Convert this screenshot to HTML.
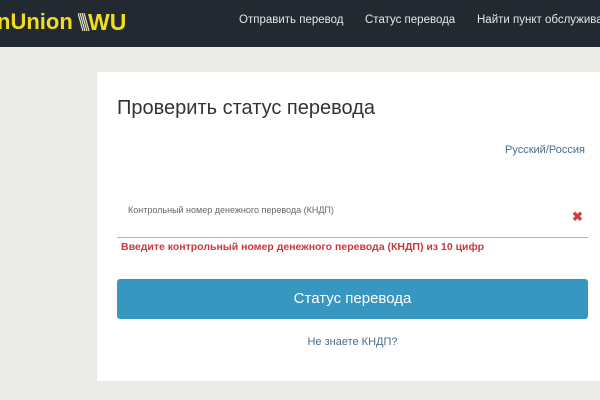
<!DOCTYPE html>
<html><head><meta charset="utf-8"><style>
*{margin:0;padding:0;box-sizing:border-box}
body{width:600px;height:400px;overflow:hidden;background:#ebebe7;font-family:"Liberation Sans",sans-serif;position:relative}
.hdr{position:absolute;left:0;top:0;width:600px;height:47px;background:#232931;overflow:hidden}
.logo{position:absolute;left:-3px;top:9px;font-size:22px;color:#f2dc1e;font-weight:bold;white-space:nowrap}
.sl{position:absolute;left:78px;top:12px}
.wu{position:absolute;left:88px;top:9px;font-size:23px;color:#f2dc1e;font-weight:bold}
.nav{position:absolute;top:14px;font-size:11.5px;color:#e6e8ea;white-space:nowrap}
.card{position:absolute;left:97px;top:72px;width:503px;height:309px;background:#fff}
.t{position:absolute;left:20px;top:25px;font-size:20px;color:#333}
.lang{position:absolute;left:408px;top:72px;font-size:11px;color:#4a6e8a}
.lbl{position:absolute;left:31px;top:133px;font-size:9px;color:#666}
.x{position:absolute;left:475px;top:137px;font-size:13px;color:#d9383a;font-weight:bold}
.line{position:absolute;left:20px;top:165px;width:471px;height:1px;background:#d9a0a0}
.err{position:absolute;left:24px;top:169px;font-size:10.5px;color:#c9393b;font-weight:bold;white-space:nowrap}
.btn{position:absolute;left:20px;top:207px;width:471px;height:40px;background:#3897c1;border-radius:3px;color:#fff;font-size:15px;text-align:center;line-height:40px}
.nk{position:absolute;left:0;width:491px;top:264px;text-align:center;font-size:11px;color:#4a6e8a;padding-left:20px}
</style></head><body>
<div class="hdr">
<div class="logo">nUnion</div>
<svg class="sl" width="12" height="20" viewBox="0 0 12 20"><g stroke="#e8e4c0" stroke-width="1.2"><line x1="0" y1="1" x2="5" y2="19"/><line x1="2" y1="1" x2="7" y2="19"/><line x1="4" y1="1" x2="9" y2="19"/><line x1="6" y1="1" x2="11" y2="19"/></g></svg>
<div class="wu">WU</div>
<div class="nav" style="left:239px">Отправить перевод</div>
<div class="nav" style="left:365px">Статус перевода</div>
<div class="nav" style="left:477px">Найти пункт обслуживания</div>
</div>
<div class="card">
<div class="t">Проверить статус перевода</div>
<div class="lang">Русский/Россия</div>
<div class="lbl">Контрольный номер денежного перевода (КНДП)</div>
<div class="x">✖</div>
<div class="line"></div>
<div class="err">Введите контрольный номер денежного перевода (КНДП) из 10 цифр</div>
<div class="btn">Статус перевода</div>
<div class="nk">Не знаете КНДП?</div>
</div>
</body></html>
